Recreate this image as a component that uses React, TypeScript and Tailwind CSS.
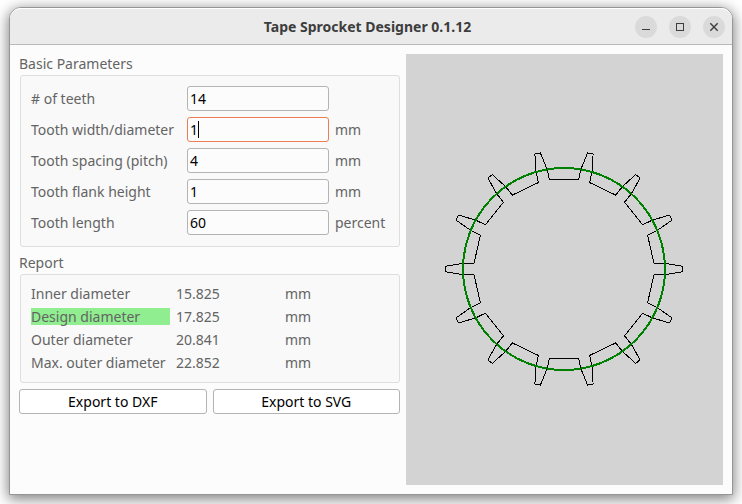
import { useState } from "react";

type Field = { id: string; label: string; value: string; unit?: string };

const FIELDS: Field[] = [
  { id: "teeth", label: "# of teeth", value: "14" },
  { id: "width", label: "Tooth width/diameter", value: "1", unit: "mm" },
  { id: "pitch", label: "Tooth spacing (pitch)", value: "4", unit: "mm" },
  { id: "flank", label: "Tooth flank height", value: "1", unit: "mm" },
  { id: "length", label: "Tooth length", value: "60", unit: "percent" },
];

const REPORT = [
  { label: "Inner diameter", value: "15.825" },
  { label: "Design diameter", value: "17.825", highlight: true },
  { label: "Outer diameter", value: "20.841" },
  { label: "Max. outer diameter", value: "22.852" },
];

// Corners of one tooth as [distance from centre, sideways offset].
const TOOTH: [number, number][] = [
  [90, -5.7],
  [101, -5.7],
  [118.5, -2.8],
  [118.5, 2.8],
  [101, 5.7],
  [90, 5.7],
];

function sprocketPoints(teeth: number) {
  const points: string[] = [];
  for (let i = 0; i < teeth; i++) {
    const a = (i * 2 * Math.PI) / teeth;
    for (const [r, s] of TOOTH) {
      const x = r * Math.cos(a) - s * Math.sin(a);
      const y = r * Math.sin(a) + s * Math.cos(a);
      points.push(`${x.toFixed(2)},${y.toFixed(2)}`);
    }
  }
  return points.join(" ");
}

function TitleBar() {
  const button = "flex size-[22px] items-center justify-center rounded-full bg-[#dadada]";
  return (
    <header className="grid h-[37px] grid-cols-[1fr_auto_1fr] items-center rounded-t-[11px] border-t border-b border-t-white border-b-[#b9b9b9] bg-[#ebebeb] pr-[7px]">
      <h1 className="col-start-2 text-[14px] font-bold text-[#3d3d3d]">Tape Sprocket Designer 0.1.12</h1>
      <div className="flex justify-end gap-3">
        <button type="button" aria-label="Minimize" className={button}>
          <svg width="10" height="10" viewBox="0 0 10 10" shapeRendering="crispEdges">
            <path d="M1 7h8v1H1z" fill="#3d3d3d" />
          </svg>
        </button>
        <button type="button" aria-label="Maximize" className={button}>
          <svg width="10" height="10" viewBox="0 0 10 10" shapeRendering="crispEdges">
            <path d="M1.5 1.5h7v7h-7z" fill="none" stroke="#3d3d3d" />
          </svg>
        </button>
        <button type="button" aria-label="Close" className={button}>
          <svg width="10" height="10" viewBox="0 0 10 10">
            <path d="M1.3 1.3l7.4 7.4M8.7 1.3L1.3 8.7" stroke="#3d3d3d" strokeWidth="1.4" />
          </svg>
        </button>
      </div>
    </header>
  );
}

function Parameters() {
  const [values, setValues] = useState<Record<string, string>>(
    Object.fromEntries(FIELDS.map((f) => [f.id, f.value])),
  );
  return (
    <section>
      <h2 className="h-[21px] leading-[20px]">Basic Parameters</h2>
      <div className="ml-px flex flex-col gap-[6px] rounded-[3px] border border-[#dedede] bg-[#f9f9f9] px-[10px] pt-[10px] pb-[11px]">
        {FIELDS.map((f) => (
          <div key={f.id} className="grid grid-cols-[150px_142px_1fr] items-center gap-[6px]">
            <label htmlFor={f.id} className="whitespace-nowrap">{f.label}</label>
            <div className="relative flex">
              <input
                id={f.id}
                type="text"
                value={values[f.id]}
                onChange={(e) => setValues({ ...values, [f.id]: e.target.value })}
                className={`h-[25px] w-full rounded-[3px] border bg-[#fcfcfc] px-[2px] text-black caret-transparent outline-none ${
                  f.id === "width" ? "border-[#ee7c54]" : "border-[#b4b4b4]"
                }`}
              />
              {f.id === "width" && <span className="absolute top-[4px] left-[11px] h-[17px] w-px bg-black" />}
            </div>
            <span>{f.unit}</span>
          </div>
        ))}
      </div>
    </section>
  );
}

function Report() {
  return (
    <section>
      <h2 className="h-[21px] leading-[20px]">Report</h2>
      <div className="ml-px rounded-[3px] border border-[#dedede] bg-[#f9f9f9] px-[4px] pt-[4px] pb-[5px]">
        <table className="w-full table-fixed border-separate border-spacing-[6px] text-left leading-[17px]">
          <colgroup>
            <col className="w-[139px]" />
            <col className="w-[103px]" />
            <col />
          </colgroup>
          <tbody>
            {REPORT.map((row) => (
              <tr key={row.label}>
                <th scope="row" className={`p-0 font-normal whitespace-nowrap ${row.highlight ? "bg-[#90ee90]" : ""}`}>
                  {row.label}
                </th>
                <td className="p-0">{row.value}</td>
                <td className="p-0">mm</td>
              </tr>
            ))}
          </tbody>
        </table>
      </div>
    </section>
  );
}

export default function App() {
  const action = "h-[25px] flex-1 rounded-[3px] border border-[#b4b4b4] bg-white text-black";
  return (
    <div className="flex min-h-screen bg-white px-[9px] pt-[7px] pb-[9px] font-['Noto_Sans',sans-serif] text-[14px] text-[#646464]">
      <div className="flex flex-1 flex-col rounded-t-[12px] border border-[#969696] bg-[#fcfcfc] shadow-[0_3px_14px_1px_rgba(0,0,0,0.5)]">
        <TitleBar />
        <main className="flex flex-1 gap-[6px] p-[9px]">
          <div className="flex w-[381px] flex-col gap-[6px]">
            <Parameters />
            <Report />
            <div className="flex gap-[6px]">
              <button type="button" className={action}>Export to DXF</button>
              <button type="button" className={action}>Export to SVG</button>
            </div>
          </div>
          <div className="flex flex-1 items-center justify-center bg-[#d3d3d3]">
            <svg width="241" height="241" viewBox="-120 -120 241 241" fill="none" shapeRendering="crispEdges" role="img" aria-label="Sprocket preview">
              <polygon points={sprocketPoints(14)} stroke="#000" />
              <circle r="101" stroke="#008000" strokeWidth="2" />
            </svg>
          </div>
        </main>
      </div>
    </div>
  );
}
